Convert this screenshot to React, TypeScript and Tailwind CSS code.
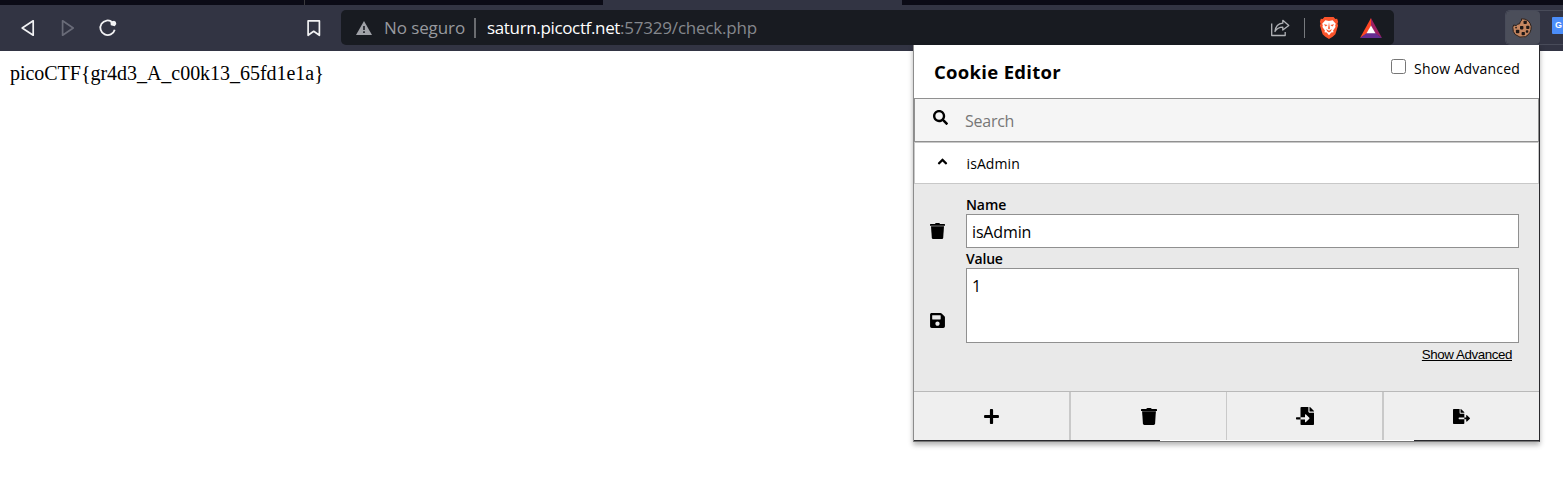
import type { ReactNode } from "react";
import { FaAngleUp, FaFileExport, FaFileImport, FaPlus, FaSave, FaSearch } from "react-icons/fa";

const UI = "font-['Open_Sans','Noto_Sans',sans-serif] whitespace-nowrap";

function TabStrip() {
  return (
    <div className="flex h-[5px] bg-[#0b0b16]">
      <div className="w-[305px] border-r border-[#3a3a3e]" />
      <div className="w-[298px]" />
      <div className="w-[299px] bg-[#323443]" />
    </div>
  );
}

function Trash({ className }: { className: string }) {
  return (
    <svg className={className} viewBox="0 0 16 17" fill="currentColor">
      <path d="M5.3.9Q5.6 0 6.5 0h3Q10.400 0 10.700.9H15.300Q16 .9 16 1.600V2.900H0V1.600Q0 .9.7.9Z" />
      <path d="M1.100 3.300H14.900L14.100 15.600Q14 17 12.700 17H3.300Q2 17 1.900 15.600Z" />
    </svg>
  );
}

function Toolbar() {
  return (
    <div className="flex h-[46px] bg-[#323443] pt-[5px]">
      <div className="flex h-[35px] w-[341px] shrink-0 items-center">
        <svg className="ml-[20px]" width="16" height="18" viewBox="0 0 16 18" fill="none" stroke="#f2f2f4" strokeWidth="1.7" strokeLinejoin="round">
          <path d="M13.2 1.8V16.2L2.2 9Z" />
        </svg>
        <svg className="ml-[24px]" width="16" height="18" viewBox="0 0 16 18" fill="none" stroke="#696b78" strokeWidth="1.7" strokeLinejoin="round">
          <path d="M2.6 1.8V16.2L13.2 9Z" />
        </svg>
        <svg className="ml-[22px]" width="20" height="18" viewBox="0 0 20 18" fill="none">
          <path d="M16.7 10.7A7.3 7.3 0 1 1 14.5 3.3" stroke="#f2f2f4" strokeWidth="1.8" />
          <path d="M12.4 2.7 16 1.8Q18.4 2.2 18.3 5L16.8 7.2 12.8 6.2Z" fill="#f2f2f4" />
        </svg>
        <svg className="ml-[188px]" width="16" height="18" viewBox="0 0 16 18" fill="none" stroke="#f2f2f4" strokeWidth="1.7" strokeLinejoin="round">
          <path d="M2.1 1.9H13.4V16.3L7.7 12.3 2.1 16.3Z" />
        </svg>
      </div>
      <div className={`flex h-[35px] w-[1053px] shrink-0 items-center rounded-[5px] bg-[#181b21] text-[17px] ${UI}`}>
        <svg className="ml-[15px]" width="16" height="14" viewBox="0 0 16 14">
          <path d="M8 0 16 14H0Z" fill="#a0a2a8" />
          <path d="M7.2 5h1.6v4H7.2ZM7.2 10.3h1.6v1.6H7.2Z" fill="#181b21" />
        </svg>
        <div className="ml-[12px] w-[82px] shrink-0 tracking-[-0.1px] text-[#97999e]">No seguro</div>
        <div className="ml-[8px] h-[20px] w-[2px] shrink-0 bg-[#6a6c70]" />
        <div className="ml-[11px] w-[133px] shrink-0 tracking-[-0.35px] text-white">saturn.picoctf.net</div>
        <div className="w-[140px] shrink-0 tracking-[-0.2px] text-[#85888d]">:57329/check.php</div>
        <svg className="ml-[510px] shrink-0" width="20" height="20" viewBox="0 0 20 20" fill="none" stroke="#b0b2b6" strokeWidth="1.3" strokeLinejoin="round">
          <path d="M1.7 5.5V17.5H15.2V14" />
          <path d="M12.8 2.3 18.8 7.4 12.8 12V9.2C9 9.2 6.8 10.5 5 13.500 5.500 8.500 8.200 5.600 12.800 5.200Z" />
        </svg>
        <div className="ml-[14px] h-[20px] w-px shrink-0 bg-[#777a7e]" />
        <svg className="ml-[14px] shrink-0" width="20" height="23" viewBox="0 0 22 24" preserveAspectRatio="none">
          <path d="M6 1h10l2 2 2-.2 1 3.2-.7 2L21 10l-3 9-3 2.7L11 24l-4-2.3L4 19 1 10l.7-2L1 6l1-3.2L4 3Z" fill="#fb542b" />
          <path d="M7 4.5 11 5.3 15 4.5 18.5 8 17.8 10 18.2 11.5 15.5 15 16 17 13.5 17.2 11 20 8.5 17.2 6 17 6.5 15 3.8 11.5 4.2 10 3.5 8Z" fill="#fff" />
          <path d="m5.300 8.500 4.200 1-2.200 1.400Zm11.400 0-4.200 1 2.200 1.400ZM11 6.500l1 6.500-1 1.200-1-1.200ZM7.800 13.600l3.200 1.700 3.200-1.700-1.200 2.400-2 1.300-2-1.300Z" fill="#fb542b" />
        </svg>
        <svg className="ml-[21px] shrink-0" width="22" height="20" viewBox="0 0 22 20">
          <path d="M11 0 0 20 7 15.500 11 8Z" fill="#ff4724" />
          <path d="M11 0 22 20 15.200 15.500 11 8Z" fill="#9e1f63" />
          <path d="M0 20H22L15.200 15H6.800Z" fill="#662d91" />
          <path d="M11 7.500 15.500 15.200H6.500Z" fill="#fff" />
        </svg>
      </div>
      <div className="ml-[111px] flex h-[35px] w-[58px] shrink-0 overflow-hidden rounded-l-[5px] border border-r-0 border-[#484b59]">
        <div className="flex w-[34px] shrink-0 items-center justify-center rounded-[4px] bg-[#4b4e5a] pr-[2px]">
          <svg width="20" height="20" viewBox="0 0 20 20">
            <path d="M9.500.8Q17.500.6 19.200 8.500 19.400 15.500 13.500 18.700 7.500 20.500 3.200 16.500.6 14 .8 9.300L1.700 7Q4.700 8.500 5.700 6.200 8.400 6.500 8.200 3.800Q10.200 3 9.500.8Z" fill="#c58660" stroke="#2b211d" strokeWidth="1" />
            <g fill="#1f1715">
              <rect x="11.500" y="2.800" width="3.300" height="3.300" rx=".8" />
              <rect x="8" y="8" width="3.400" height="3.400" rx=".8" />
              <rect x="14.200" y="7.800" width="3.200" height="3.200" rx=".8" />
              <rect x="3.900" y="11.800" width="3.400" height="3.400" rx=".8" />
              <rect x="9.600" y="14" width="3.300" height="3.300" rx=".8" />
              <rect x="13.800" y="12.200" width="2.500" height="2.500" rx=".8" />
              <rect x="3.200" y="8.700" width="1.700" height="1.700" rx=".7" />
            </g>
          </svg>
        </div>
        <div className="mt-[6px] ml-[12px] h-[17px] w-[16px] shrink-0 rounded-[1px] bg-[#4b8df8] pl-[3px] font-['Liberation_Sans',sans-serif] text-[9px] leading-[17px] font-bold text-white">G</div>
      </div>
    </div>
  );
}

function ActionButton({ children, className }: { children: ReactNode; className: string }) {
  return <button className={`flex h-full items-center justify-center bg-[#efefef] text-black ${className}`}>{children}</button>;
}

function CookieEditor() {
  return (
    <div className={`absolute top-[45px] left-[913px] w-[627px] border-r border-b border-l border-[#777] border-r-[#29292d] border-l-[#8c8c8c] bg-white text-black shadow-[0_3px_5px_rgba(0,0,0,0.3)] ${UI}`}>
      <div className="flex h-[53px] justify-between pr-[19px] pl-[20px]">
        <h1 className="mt-[13px] text-[18.5px] leading-[28px] font-bold tracking-[0.3px]">Cookie Editor</h1>
        <label className="mt-[14px] flex h-[20px] text-[14px] leading-[20px]">
          <span className="mr-[8px] h-[15px] w-[15px] rounded-[2.5px] border border-[#767676] bg-white" />
          <span className="w-[106px] tracking-[0.23px]">Show Advanced</span>
        </label>
      </div>
      <div className="flex h-[44px] border border-[#909090] bg-[#f5f5f5] pl-[18px]">
        <FaSearch className="mt-[11px] shrink-0" size={15} />
        <div className="ml-[17px] text-[16px] leading-[44px] tracking-[-0.25px] text-[#777]">Search</div>
      </div>
      <div className="flex h-[42px] border border-[#c8c8c8] bg-white pl-[20px]">
        <FaAngleUp className="mt-[11px] shrink-0" size={15} />
        <div className="ml-[16.5px] text-[14px] leading-[42px] tracking-[0.1px]">isAdmin</div>
      </div>
      <div className="flex h-[207px] bg-[#e9e9e9]">
        <div className="flex w-[52px] shrink-0 flex-col pl-[16px]">
          <Trash className="mt-[39px] h-[16px] w-[15px]" />
          <FaSave className="mt-[73px] -ml-[1px] h-[17px] w-[17px]" />
        </div>
        <div className="flex w-[553px] flex-col pt-[11px]">
          <div className="h-[19px] text-[14px] leading-[20px] font-semibold tracking-[-0.1px]">Name</div>
          <div className="h-[34px] border border-[#909090] bg-white pl-[5px] text-[16px] leading-[34px] tracking-[-0.15px]">isAdmin</div>
          <div className="h-[20px] text-[14px] leading-[21px] font-semibold tracking-[-0.2px]">Value</div>
          <div className="h-[75px] border border-[#909090] bg-white pl-[5px] text-[16px] leading-[35px]">1</div>
          <div className="mt-[4px] pr-[7px] text-right font-['Liberation_Sans',sans-serif] text-[13.33px] leading-[15px] tracking-[-0.42px] underline">Show Advanced</div>
        </div>
      </div>
      <div className="flex h-[49px] border-t border-[#b9b9b9]">
        <ActionButton className="w-[157px] border-r-2 border-[#c9c9c9]"><FaPlus size={17} /></ActionButton>
        <ActionButton className="w-[156px] border-r border-[#c9c9c9]"><Trash className="h-[17px] w-[16px]" /></ActionButton>
        <ActionButton className="w-[157px] border-r-2 border-[#c9c9c9]"><FaFileImport size={18} /></ActionButton>
        <ActionButton className="w-[155px]"><FaFileExport size={17} /></ActionButton>
      </div>
      <div className="flex h-px justify-between bg-white">
        <div className="w-[246px] bg-[#29292d]" />
        <div className="w-[125px] bg-[#29292d]" />
      </div>
    </div>
  );
}

export default function App() {
  return (
    <div className="relative h-[488px] w-[1563px] overflow-hidden bg-white">
      <TabStrip />
      <Toolbar />
      <p className="pt-[11px] pl-[10px] font-['Liberation_Serif',serif] text-[20px] leading-[22px] tracking-[-0.03px] text-black">picoCTF&#123;gr4d3_A_c00k13_65fd1e1a&#125;</p>
      <CookieEditor />
    </div>
  );
}
